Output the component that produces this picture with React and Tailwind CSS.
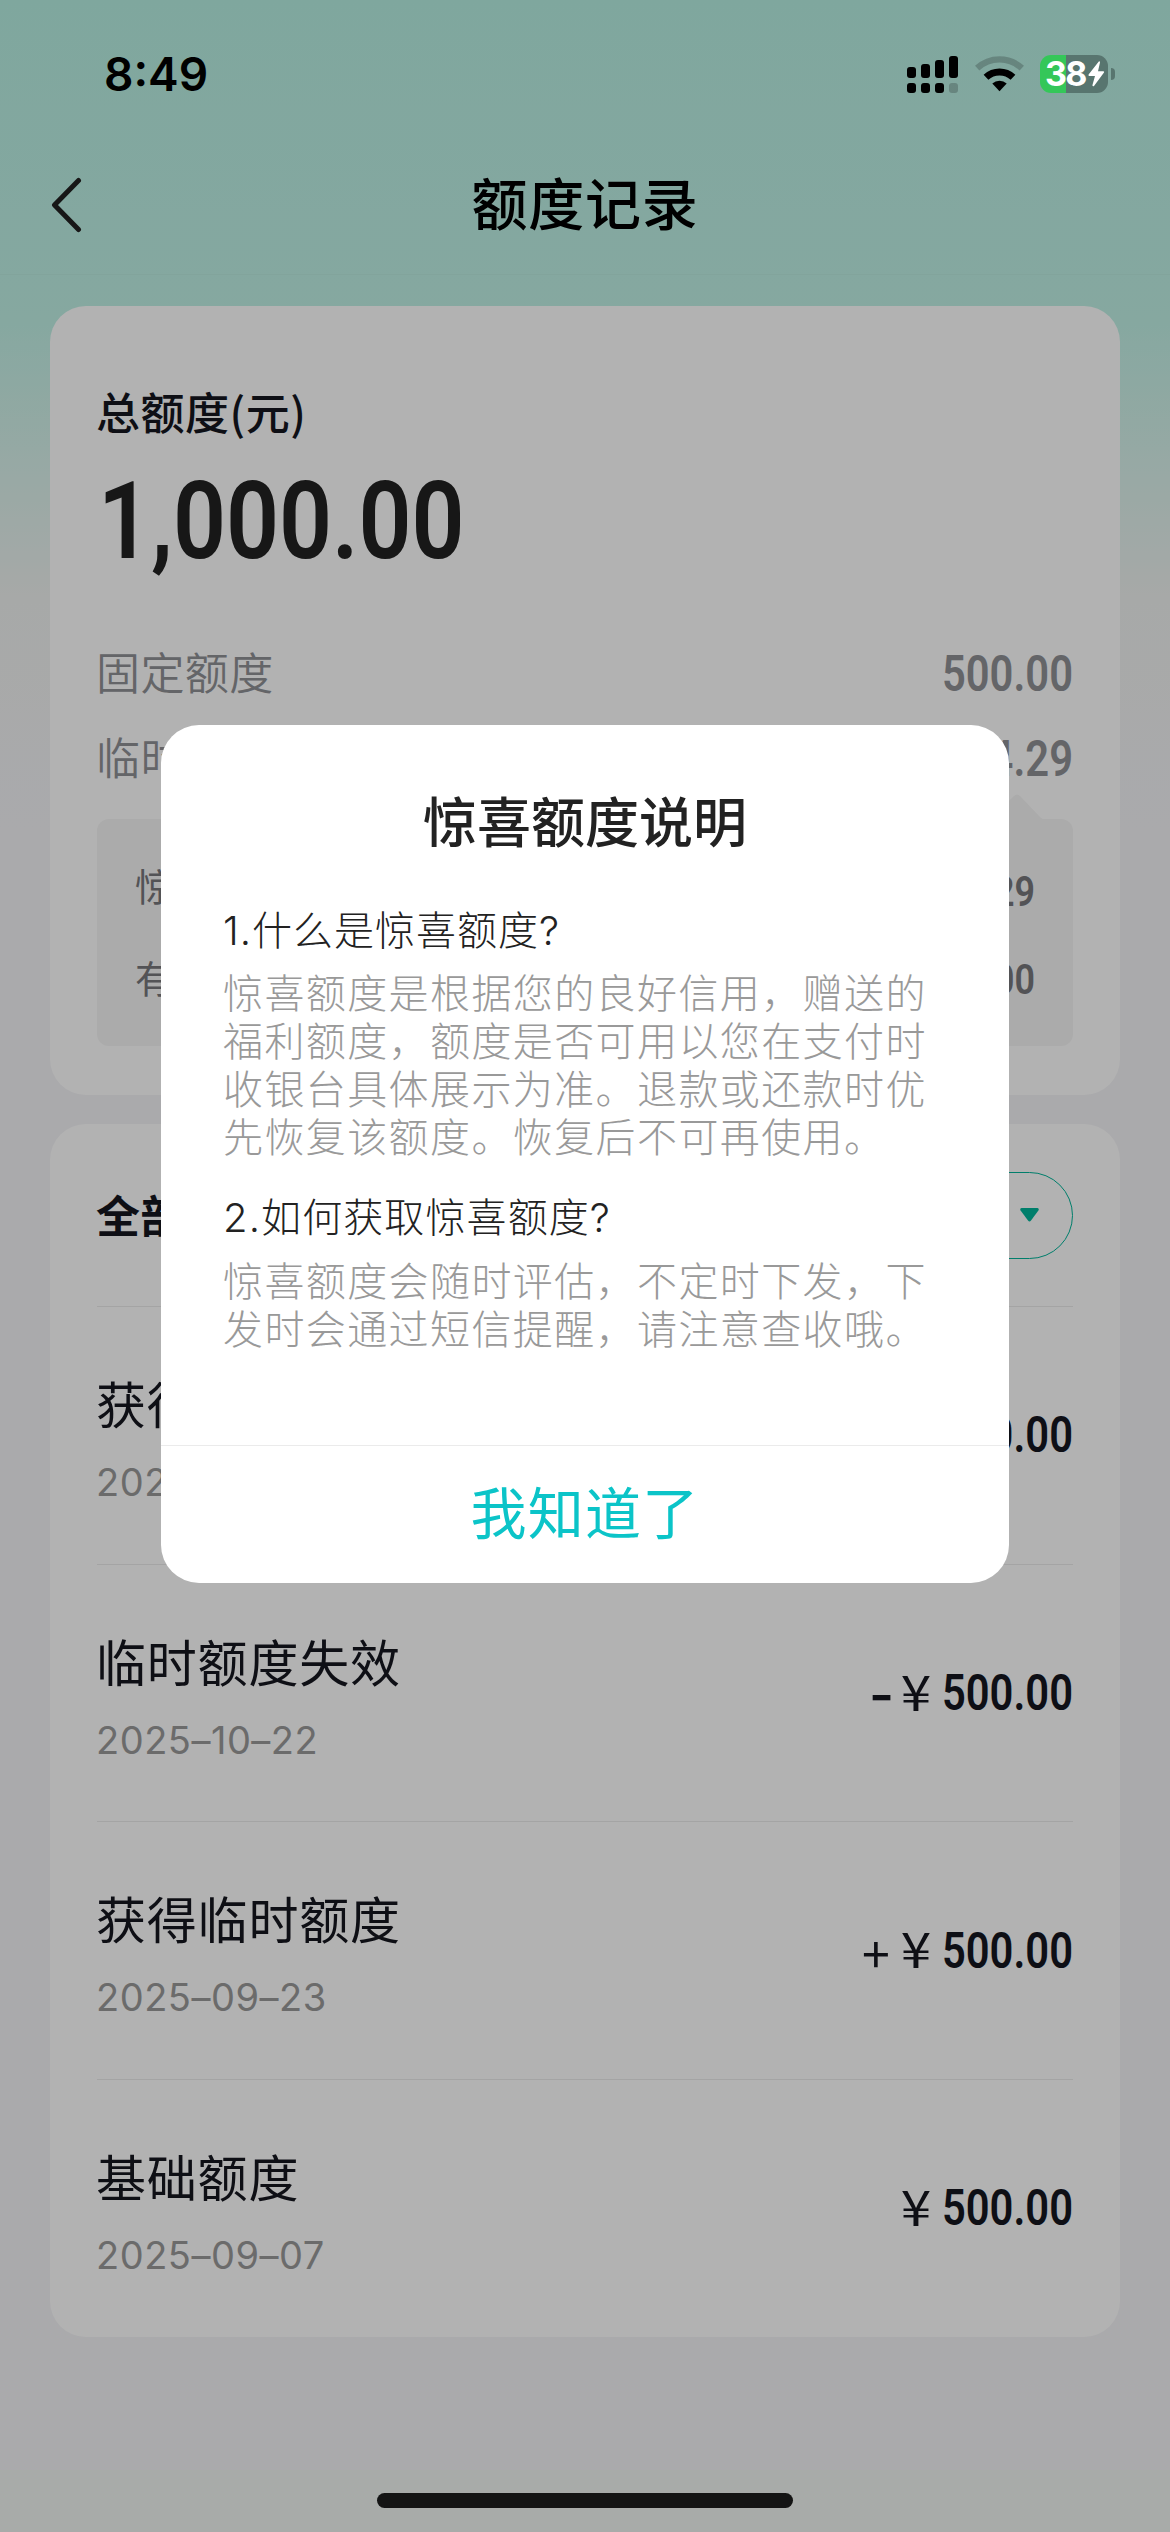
import { useState } from "react";

const records = [
  { id: 1, title: "获得临时额度", date: "2025–10–23", sign: "+", amount: "500.00" },
  { id: 2, title: "临时额度失效", date: "2025–10–22", sign: "-", amount: "500.00" },
  { id: 3, title: "获得临时额度", date: "2025–09–23", sign: "+", amount: "500.00" },
  { id: 4, title: "基础额度", date: "2025–09–07", sign: "", amount: "500.00" },
];

function StatusBar() {
  return (
    <div className="absolute inset-x-0 top-0 z-20 flex h-[148px] items-center justify-between pr-[55px] pl-[104px]">
      <span className="font-['Inter'] text-[46px] leading-none font-semibold text-black">8:49</span>
      <div className="flex items-center">
        <svg className="h-[38px] w-[51px]" viewBox="0 0 51 38">
          <rect x="0" y="12" width="9" height="11" rx="3" />
          <rect x="14" y="9" width="9" height="14" rx="3" />
          <rect x="28" y="5" width="9" height="18" rx="3" />
          <rect x="42" y="1" width="9" height="22" rx="3" />
          <rect x="0" y="28" width="9" height="10" rx="3" />
          <rect x="14" y="28" width="9" height="10" rx="3" />
          <rect x="28" y="28" width="9" height="10" rx="3" />
          <rect x="42" y="28" width="9" height="10" rx="3" opacity="0.2" />
        </svg>
        <svg className="ml-[17px] h-[38px] w-[49px]" viewBox="0 0 49 38" fill="none" stroke="#000">
          <path d="M2.2 13.2A32.7 32.7 0 0 1 46.8 13.2" strokeWidth="6.4" opacity="0.2" />
          <path d="M11 22.2A19.8 19.8 0 0 1 38 22.2" strokeWidth="7" />
          <path d="M24.5 36.2L17.3 28.6A10.6 10.6 0 0 1 31.7 28.6Z" fill="#000" stroke="none" />
        </svg>
        <div className="ml-[16px] flex items-center gap-[3px]">
          <div className="flex h-[38px] w-[68px] items-center rounded-[11px] bg-[linear-gradient(90deg,#34c759_26px,#58756f_26px)] pl-[5px]">
            <span className="font-['Inter'] text-[34px] leading-[38px] font-bold tracking-[-1.6px] text-white">38</span>
            <svg className="ml-[2px] h-[26px] w-[17px]" viewBox="0 0 17 26" fill="#fff">
              <path d="M10.8 0.4L0.6 13.6Q0 14.8 1.2 14.9H7L4.4 24.2Q4.6 25.8 6 25L16 11.6Q16.6 10.4 15.4 10.3H10L12 1.4Q12 0 10.8 0.4Z" />
            </svg>
          </div>
          <div className="h-[12px] w-[4px] rounded-r-full bg-[#58756f]" />
        </div>
      </div>
    </div>
  );
}

function Amount({ children, className }) {
  return (
    <span className={`inline-block origin-right scale-x-[0.835] font-['Roboto'] leading-none font-semibold ${className}`}>
      {children}
    </span>
  );
}

function SummaryCard() {
  return (
    <section className="mt-[31px] h-[789px] rounded-[36px] bg-white px-[47px] pt-[77px]">
      <h2 className="ml-[-1px] text-[44px] leading-[56px] font-medium tracking-[0.5px] text-[#15161f]">总额度(元)</h2>
      <p className="mt-[27px] ml-[1px] origin-left scale-x-[0.86] font-['Roboto'] text-[108px] leading-[110px] font-semibold text-[#222]">
        1,000.00
      </p>
      <div className="mt-[55px] flex h-[85px] items-center justify-between text-[#909196]">
        <span className="ml-[-1px] pb-[5px] text-[44px] font-[350] tracking-[0.4px]">固定额度</span>
        <Amount className="text-[50px]">500.00</Amount>
      </div>
      <div className="flex h-[85px] items-center justify-between text-[#909196]">
        <span className="ml-[-1px] pb-[5px] text-[44px] font-[350] tracking-[0.4px]">临时额度</span>
        <Amount className="text-[50px]">504.29</Amount>
      </div>
      <div className="relative mt-[18px] flex h-[227px] flex-col justify-center rounded-[12px] bg-[#f5f5f5] px-[38px] text-[#77777c]">
        <svg className="absolute -top-[25px] right-[28px] h-[26px] w-[56px]" viewBox="0 0 56 26" fill="#f5f5f5">
          <path d="M0 26L25 2Q28 -1 31 2L51 23Q53 25 56 26Z" />
        </svg>
        <div className="flex h-[88px] items-center justify-between">
          <span className="pb-[8px] text-[38px]">惊喜额度</span>
          <Amount className="pt-[6px] text-[43px]">4.29</Amount>
        </div>
        <div className="flex h-[88px] items-center justify-between">
          <span className="text-[38px]">有效额度</span>
          <Amount className="pt-[5px] text-[43px]">500.00</Amount>
        </div>
      </div>
    </section>
  );
}

function RecordRow({ record }) {
  return (
    <li className="flex h-[257.7px] items-center justify-between border-t border-[#ebebeb]">
      <div className="ml-[-1px] pt-[8px]">
        <p className="text-[50px] leading-[60px] tracking-[0.8px] text-[#15161f]">{record.title}</p>
        <p className="mt-[25px] font-['Inter'] text-[38px] leading-[50px] tracking-[0.5px] text-[#9a9a9a]">{record.date}</p>
      </div>
      <div className="flex items-center text-[#15161f]">
        {record.sign === "-" ? (
          <span className="mr-[10px] origin-right scale-x-[1.3] pb-[6px] text-[50px] leading-none font-bold">-</span>
        ) : (
          <span className="mr-[14px] text-[50px] leading-none">{record.sign}</span>
        )}
        <span className="mr-[-15px] origin-right scale-x-[1.12] pb-[8px] text-[49px] leading-none">¥</span>
        <Amount className="text-[50px]">{record.amount}</Amount>
      </div>
    </li>
  );
}

function RecordsCard() {
  return (
    <section className="mt-[29px] h-[1213px] rounded-[36px] bg-white px-[47px]">
      <div className="flex h-[182px] items-center justify-between">
        <h2 className="ml-[-1px] pb-[2px] text-[44px] font-semibold tracking-[0.3px] text-[#15161f]">全部记录</h2>
        <button className="flex h-[87px] w-[240px] items-center justify-end gap-[14px] rounded-full border-[1.5px] border-[#00b59a] pr-[33px] text-[38px] text-[#00b59a]">
          全部
          <svg className="h-[14px] w-[19px]" viewBox="0 0 19 14" fill="#00b59a">
            <path d="M1.5 0H17.5Q19.5 0.6 18.4 2.6L11 12.6Q9.5 14.4 8 12.6L0.6 2.6Q-0.5 0.6 1.5 0Z" />
          </svg>
        </button>
      </div>
      <ul>
        {records.map((record) => (
          <RecordRow key={record.id} record={record} />
        ))}
      </ul>
    </section>
  );
}

function SurpriseQuotaDialog({ onClose }) {
  return (
    <div className="absolute inset-0 z-10 bg-black/30 pt-[725px]">
      <div className="mx-auto flex h-[858px] w-[848px] flex-col rounded-[38px] bg-white">
        <div className="flex-1 pt-[63px] pl-[62px]">
          <h2 className="mr-[62px] text-center text-[54px] leading-[64px] font-medium text-[#222]">惊喜额度说明</h2>
          <h3 className="mt-[55px] font-['Inter','Noto_Sans_CJK_SC',sans-serif] text-[40px] leading-[48px] font-light tracking-[1px] text-[#222]">
            1.什么是惊喜额度?
          </h3>
          <p className="mt-[12px] text-[40px] leading-[48px] font-light tracking-[1.4px] text-[#999]">
            惊喜额度是根据您的良好信用，赠送的
            <br />
            福利额度，额度是否可用以您在支付时
            <br />
            收银台具体展示为准。退款或还款时优
            <br />
            先恢复该额度。恢复后不可再使用。
          </p>
          <h3 className="mt-[35px] font-['Inter','Noto_Sans_CJK_SC',sans-serif] text-[40px] leading-[48px] font-light tracking-[1.1px] text-[#222]">
            2.如何获取惊喜额度?
          </h3>
          <p className="mt-[13px] text-[40px] leading-[48px] font-light tracking-[1.4px] text-[#999]">
            惊喜额度会随时评估，不定时下发，下
            <br />
            发时会通过短信提醒，请注意查收哦。
          </p>
        </div>
        <button onClick={onClose} className="h-[138px] border-t border-[#ebebeb] pb-[9px] text-[56px] tracking-[1.3px] text-[#0bc4c8]">
          我知道了
        </button>
      </div>
    </div>
  );
}

export default function App() {
  const [open, setOpen] = useState(true);

  return (
    <div className="relative h-[2532px] w-[1170px] overflow-hidden font-['Noto_Sans_CJK_SC',sans-serif]">
      <div className="h-full bg-[linear-gradient(180deg,#b7f0e3_0px,#c0f1e6_320px,#f0f3f1_600px,#f4f4f7_830px,#f4f4f7_2470px,#f1f5f2_2470px)]">
        <header className="flex h-[275px] items-end border-b border-[#bbebe0] px-[50px]">
          <div className="flex h-[139px] flex-1 items-center">
            <svg className="h-[56px] w-[34px]" viewBox="0 0 34 56" fill="none" stroke="#222" strokeWidth="5" strokeLinecap="round" strokeLinejoin="round">
              <path d="M28.5 3.5L4.5 28L28.5 52.5" />
            </svg>
            <h1 className="mr-[34px] flex-1 pb-[8px] text-center text-[56px] font-medium tracking-[0.7px] text-black">额度记录</h1>
          </div>
        </header>
        <main className="px-[50px]">
          <SummaryCard />
          <RecordsCard />
        </main>
      </div>
      {open && <SurpriseQuotaDialog onClose={() => setOpen(false)} />}
      <StatusBar />
      <div className="absolute bottom-[24px] left-[377px] z-20 h-[15px] w-[416px] rounded-full bg-[#141414]" />
    </div>
  );
}
